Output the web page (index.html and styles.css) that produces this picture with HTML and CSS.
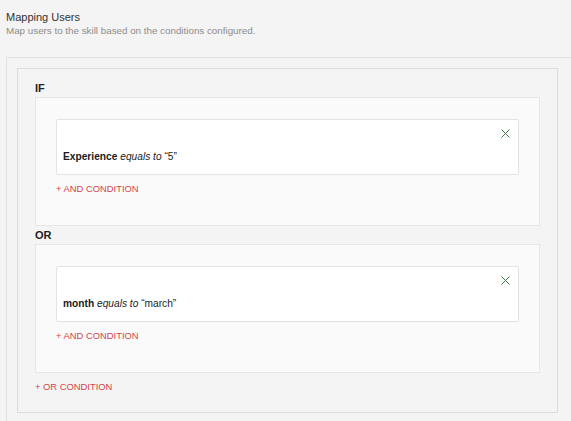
FILE: index.html
```html
<!DOCTYPE html>
<html>
<head>
<meta charset="utf-8">
<link rel="stylesheet" href="styles.css">
</head>
<body>
  <header class="head">
    <h1 class="title">Mapping Users</h1>
    <p class="subtitle">Map users to the skill based on the conditions configured.</p>
  </header>
  <section class="outer">
    <div class="rules">
      <div class="group-label">IF</div>
      <div class="group">
        <div class="card">
          <div class="card-top">
            <svg class="close" width="9" height="9" viewBox="0 0 9 9"><path d="M0.5 0.5 L8.5 8.5 M8.5 0.5 L0.5 8.5" stroke="#3d7a4a" stroke-width="1" fill="none"/></svg>
          </div>
          <div class="cond"><b>Experience</b> <i>equals to</i> “5”</div>
        </div>
        <div class="link">+ AND CONDITION</div>
      </div>
      <div class="group-label or">OR</div>
      <div class="group">
        <div class="card">
          <div class="card-top">
            <svg class="close" width="9" height="9" viewBox="0 0 9 9"><path d="M0.5 0.5 L8.5 8.5 M8.5 0.5 L0.5 8.5" stroke="#3d7a4a" stroke-width="1" fill="none"/></svg>
          </div>
          <div class="cond"><b>month</b> <i>equals to</i> “march”</div>
        </div>
        <div class="link">+ AND CONDITION</div>
      </div>
      <div class="link or-link">+ OR CONDITION</div>
    </div>
  </section>
</body>
</html>
```
FILE: styles.css
```css
html, body {
  margin: 0;
  padding: 0;
  background: #f4f4f4;
  font-family: "Liberation Sans", Arial, sans-serif;
  color: #222;
  overflow: hidden;
}
.head {
  padding: 10px 6px 0 6px;
  height: 47px;
  box-sizing: border-box;
}
.title {
  margin: 0;
  font-size: 11px;
  font-weight: normal;
  line-height: 14px;
  color: #333;
}
.subtitle {
  margin: 1px 0 0 0;
  font-size: 9.8px;
  line-height: 12px;
  color: #8c8c8c;
}
.outer {
  margin-left: 6px;
  margin-right: -20px;
  border-top: 1px solid #e2e2e2;
  border-left: 1px solid #e2e2e2;
  padding: 10px;
  margin-top: 10px;
}
.rules {
  box-sizing: border-box;
  width: 541px;
  border: 1px solid #dcdcdc;
  background: #f4f4f4;
  padding: 12px 17px 19px 17px;
}
.group-label {
  font-size: 11px;
  font-weight: bold;
  line-height: 14px;
  margin-bottom: 2px;
  color: #222;
}
.group-label.or {
  margin-top: 2px;
}
.group {
  border: 1px solid #e6e6e6;
  background: #fafafa;
  padding: 21px 20px 30px 20px;
}
.card {
  background: #fff;
  border: 1px solid #e3e3e3;
  border-radius: 2px;
  padding: 9px 8px 10px 6px;
}
.card-top {
  display: flex;
  justify-content: flex-end;
  height: 10px;
}
.close {
  display: block;
}
.cond {
  margin-top: 11px;
  font-size: 10.2px;
  line-height: 14px;
  color: #222;
}
.cond b {
  font-weight: bold;
  color: #1a1a1a;
}
.link {
  margin-top: 8px;
  font-size: 9.4px;
  line-height: 12px;
  color: #d2454c;
}
.or-link {
  margin-top: 8px;
}
```
